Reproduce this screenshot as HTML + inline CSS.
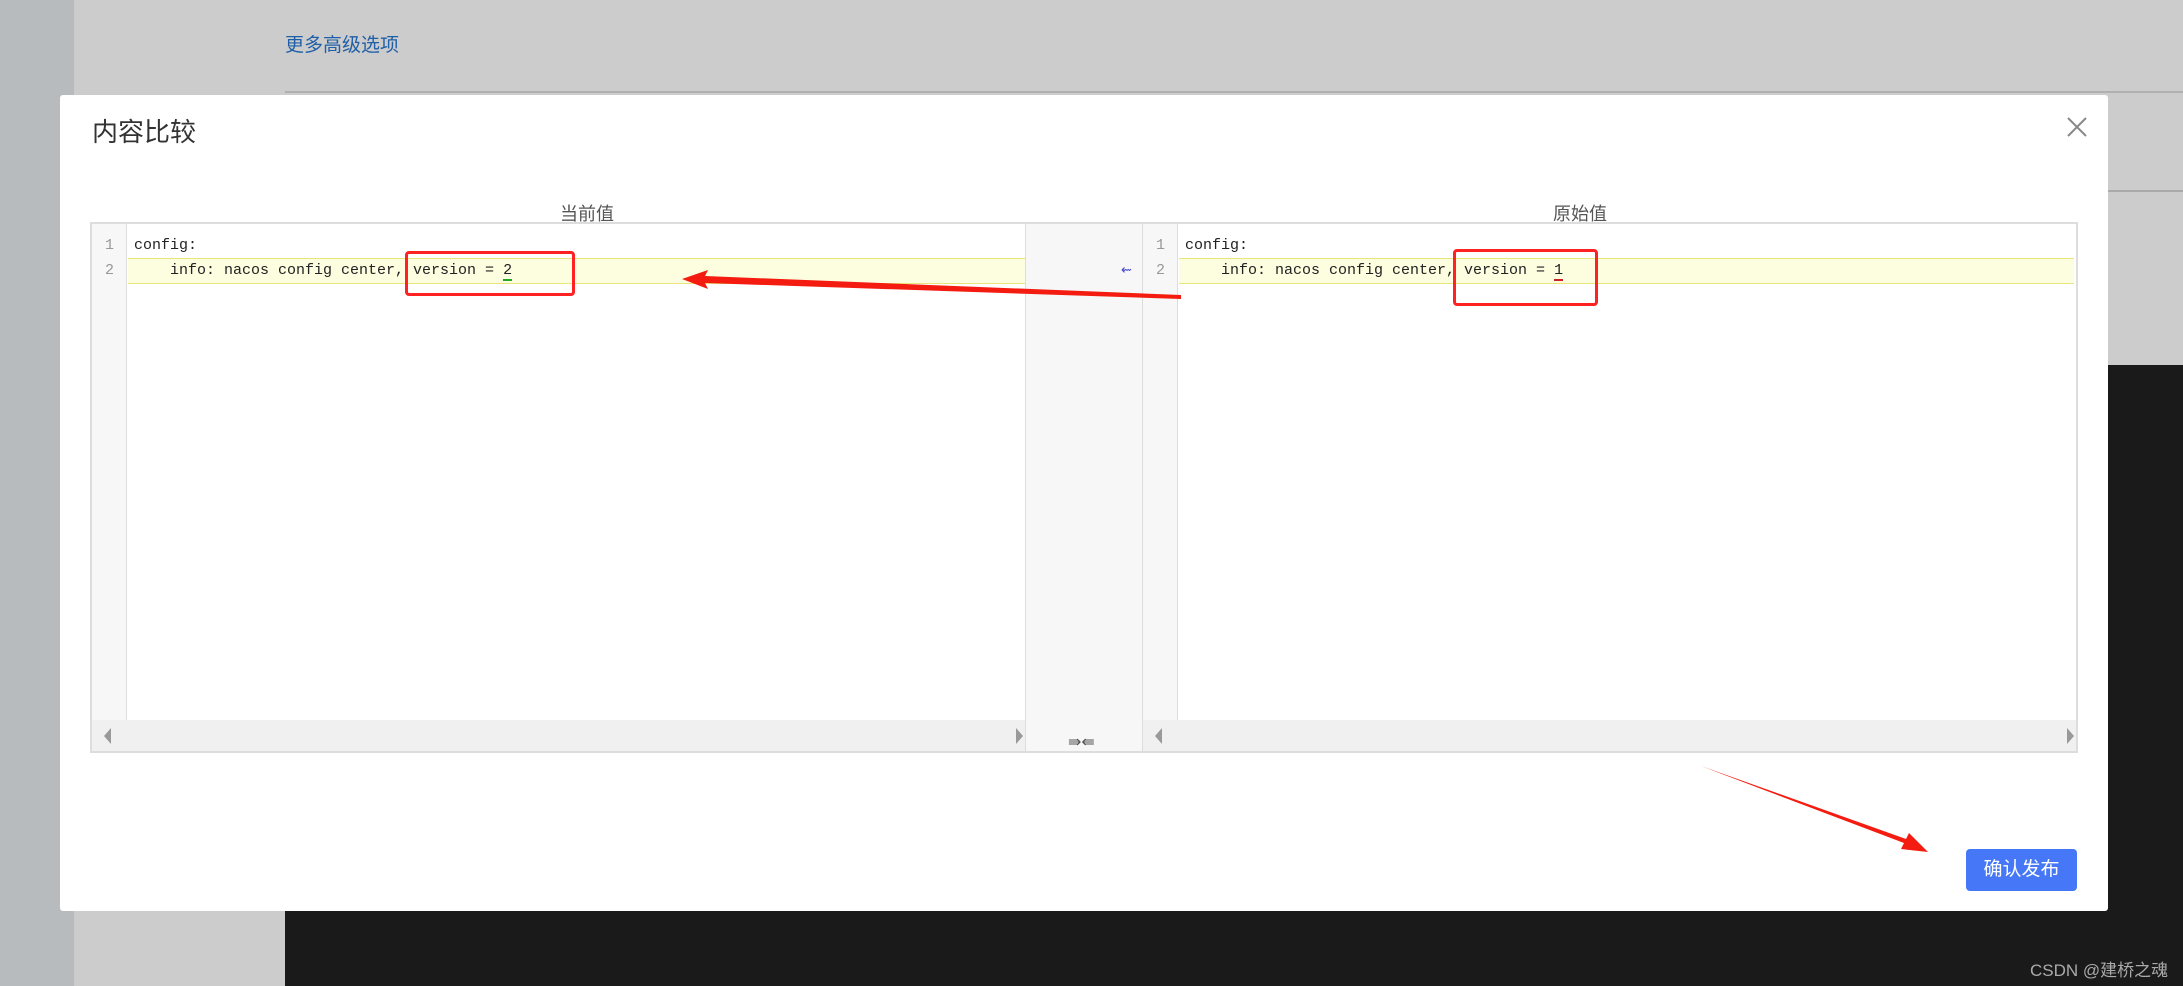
<!DOCTYPE html>
<html><head><meta charset="utf-8"><style>
*{margin:0;padding:0;box-sizing:border-box}
body{width:2183px;height:986px;position:relative;overflow:hidden;background:#cccccc;font-family:"Liberation Sans","Noto Sans CJK SC",sans-serif}
.abs{position:absolute}
.code{font-family:"Liberation Mono","Noto Sans CJK SC",monospace;font-size:15px;color:#222;white-space:pre}
.ln{font-family:"Liberation Mono",monospace;font-size:15px;color:#999;width:35px;text-align:center}
</style></head><body>
<div class="abs" style="left:0;top:0;width:74px;height:986px;background:#b8bbbe"></div>
<div class="abs" style="left:285px;top:36px;font-size:19px;color:#1f5fa8;line-height:1">更多高级选项</div>
<div class="abs" style="left:285px;top:91px;width:1898px;height:2px;background:#b0b0b0"></div>
<div class="abs" style="left:2108px;top:190px;width:75px;height:2px;background:#aaa"></div>
<div class="abs" style="left:285px;top:365px;width:1898px;height:621px;background:#1a1a1a"></div>
<div class="abs" style="left:2030px;top:956px;font-size:17px;color:#aaa">CSDN @建桥之魂</div>

<div class="abs" style="left:60px;top:95px;width:2048px;height:816px;background:#fff;border-radius:3px"></div>
<div class="abs" style="left:92px;top:119px;font-size:26px;color:#333;line-height:1">内容比较</div>
<svg class="abs" style="left:2067px;top:117px" width="20" height="20"><path d="M1 1L19 19M19 1L1 19" stroke="#888" stroke-width="2"/></svg>
<div class="abs" style="left:527px;top:200px;width:120px;text-align:center;font-size:18px;color:#555">当前值</div>
<div class="abs" style="left:1520px;top:200px;width:120px;text-align:center;font-size:18px;color:#555">原始值</div>

<div class="abs" style="left:90px;top:222px;width:1988px;height:531px;border:2px solid #ddd;background:#fff"></div>
<div class="abs" style="left:92px;top:224px;width:35px;height:496px;background:#f7f7f7;border-right:1px solid #ddd"></div>
<div class="abs" style="left:1025px;top:224px;width:118px;height:527px;background:#f7f7f7;border-left:1px solid #ddd;border-right:1px solid #ddd"></div>
<div class="abs" style="left:1143px;top:224px;width:35px;height:496px;background:#f7f7f7;border-right:1px solid #ddd"></div>
<div class="abs" style="left:128px;top:258px;width:897px;height:26px;background:#fdfde0;border-top:1px solid #e8e57a;border-bottom:1px solid #e8e57a"></div>
<div class="abs" style="left:1179px;top:258px;width:895px;height:26px;background:#fdfde0;border-top:1px solid #e8e57a;border-bottom:1px solid #e8e57a"></div>
<div class="abs" style="left:92px;top:720px;width:933px;height:31px;background:#f0f0f0"></div>
<div class="abs" style="left:1143px;top:720px;width:933px;height:31px;background:#f0f0f0"></div>
<div class="abs" style="left:104px;top:728px;width:0;height:0;border-top:8px solid transparent;border-bottom:8px solid transparent;border-right:7px solid #999"></div>
<div class="abs" style="left:1016px;top:728px;width:0;height:0;border-top:8px solid transparent;border-bottom:8px solid transparent;border-left:7px solid #999"></div>
<div class="abs" style="left:1155px;top:728px;width:0;height:0;border-top:8px solid transparent;border-bottom:8px solid transparent;border-right:7px solid #999"></div>
<div class="abs" style="left:2067px;top:728px;width:0;height:0;border-top:8px solid transparent;border-bottom:8px solid transparent;border-left:7px solid #999"></div>
<div class="abs" style="left:1068px;top:732px;font-size:16px;color:#555">⇛⇚</div>
<div class="abs" style="left:1121px;top:262px;font-size:13px;color:#44c">⇜</div>

<div class="abs ln" style="left:92px;top:237px">1</div>
<div class="abs ln" style="left:92px;top:262px">2</div>
<div class="abs ln" style="left:1143px;top:237px">1</div>
<div class="abs ln" style="left:1143px;top:262px">2</div>
<div class="abs code" style="left:134px;top:237px">config:</div>
<div class="abs code" style="left:134px;top:262px">    info: nacos config center, version = <span style="border-bottom:2px solid #2a2">2</span></div>
<div class="abs code" style="left:1185px;top:237px">config:</div>
<div class="abs code" style="left:1185px;top:262px">    info: nacos config center, version = <span style="border-bottom:2px solid #c22">1</span></div>

<div class="abs" style="left:405px;top:251px;width:170px;height:45px;border:3px solid #f22;border-radius:4px"></div>
<div class="abs" style="left:1453px;top:249px;width:145px;height:57px;border:3px solid #f22;border-radius:4px"></div>
<svg class="abs" style="left:0;top:0" width="2183" height="986">
<polygon points="1181,295 705,276 708,270 682,279 708,289 705,283 1181,299" fill="#f41c10"/>
<polygon points="1701,766 1904,843 1901,849 1928,852 1909,833 1906,839" fill="#f41c10"/>
</svg>
<div class="abs" style="left:1966px;top:849px;width:111px;height:42px;background:#4577f6;border-radius:4px;color:#fff;font-size:19px;text-align:center;line-height:42px">确认发布</div>
</body></html>
